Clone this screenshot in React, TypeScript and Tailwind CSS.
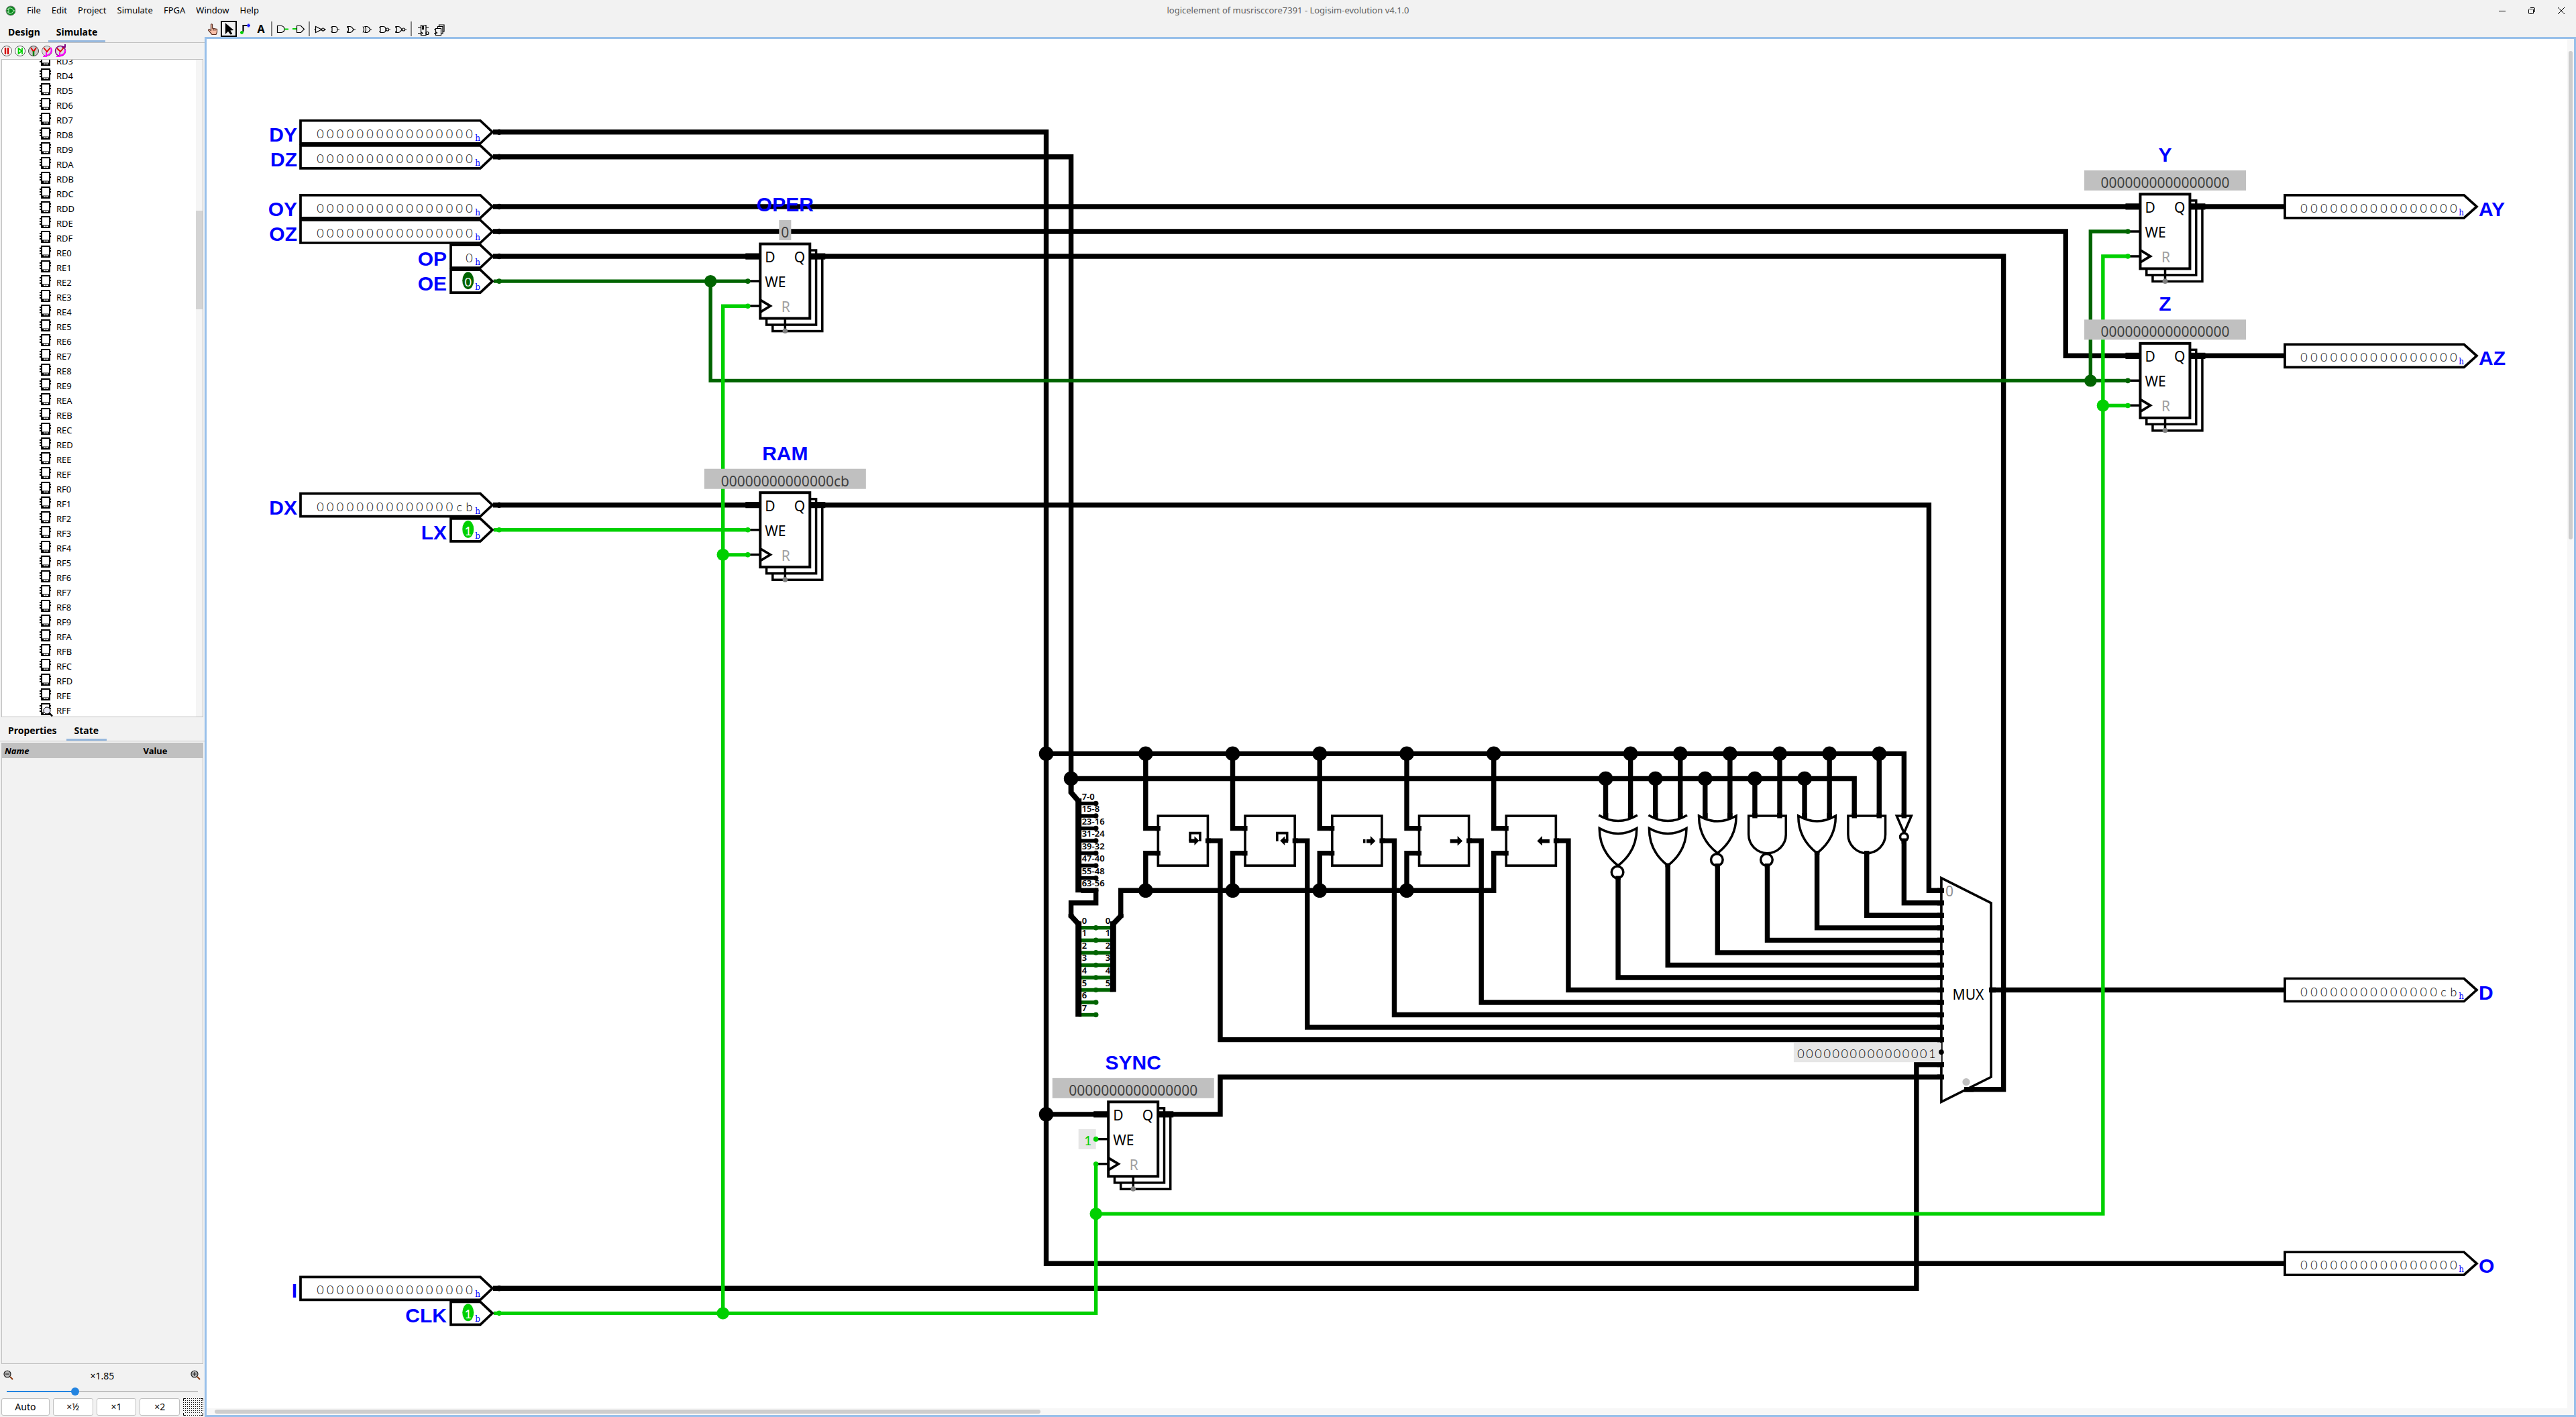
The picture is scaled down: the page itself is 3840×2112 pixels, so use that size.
import type { ReactNode } from "react";

const BLACK = "#000000";
const LOW = "#006400";
const HIGH = "#00d000";

const menus = ["File", "Edit", "Project", "Simulate", "FPGA", "Window", "Help"];
const HEX = "0123456789ABCDEF".split("");
const nodes = [
  ...HEX.slice(3).map((d) => "RD" + d),
  ...HEX.map((d) => "RE" + d),
  ...HEX.map((d) => "RF" + d),
];

// grid column / row to canvas pixels
const gx = (col: number) => col * 18.533 - 231.1;
const gy = (row: number) => row * 18.533 - 46.6;

type Point = [number, number];

function Wire({ pts, color = BLACK, bus = true }: { pts: Point[]; color?: string; bus?: boolean }) {
  return (
    <polyline
      points={pts.map(([c, r]) => `${gx(c)},${gy(r)}`).join(" ")}
      fill="none"
      stroke={color}
      strokeWidth={bus ? 7.4 : 5.4}
      strokeLinecap="square"
    />
  );
}

function Dot({ c, r, color = BLACK, size = 3.8 }: { c: number; r: number; color?: string; size?: number }) {
  return <circle cx={gx(c)} cy={gy(r)} r={size} fill={color} />;
}

function Label({ x, y, anchor = "middle", children }: { x: number; y: number; anchor?: "start" | "middle" | "end"; children: string }) {
  return (
    <text x={x} y={y} textAnchor={anchor} className="fill-[#0000ff] font-['Liberation_Sans',sans-serif] text-[30px] font-bold">
      {children}
    </text>
  );
}

// values are drawn one digit per cell
function Digits({ value, x, y, pitch }: { value: string; x: number; y: number; pitch: number }) {
  return (
    <g className="fill-black font-[Lato,sans-serif] text-[18px] font-light">
      {value.split("").map((d, i) => (
        <text key={i} x={x + i * pitch} y={y} textAnchor="middle">
          {d}
        </text>
      ))}
    </g>
  );
}

function Radix({ x, y, children }: { x: number; y: number; children: string }) {
  return (
    <text x={x} y={y} textAnchor="middle" className="fill-[#0000ff] font-['DejaVu_Serif',serif] text-[12px]">
      {children}
    </text>
  );
}

const ZERO = "0".repeat(16);

function InputPin({ row, name, value = ZERO, bit }: { row: number; name: string; value?: string; bit?: string }) {
  const y = gy(row);
  const small = value.length === 1;
  const left = small ? 364 : 140;
  return (
    <g>
      <path
        d={`M${left} ${y - 17}H408L426 ${y}L408 ${y + 17}H${left}Z`}
        fill="#fff"
        stroke="#000"
        strokeWidth="3.7"
      />
      {bit ? (
        <>
          <ellipse cx={gx(33.5)} cy={y - 1} rx="8.5" ry="13" fill={bit} />
          <text x={gx(33.5)} y={y + 8} textAnchor="middle" className="fill-white font-[Lato,sans-serif] text-[18px]">
            {value}
          </text>
        </>
      ) : (
        <Digits value={value} x={small ? 391.5 : 169.5} y={y + 9} pitch={14.8} />
      )}
      <Radix x={404} y={y + 13}>{bit ? "b" : "h"}</Radix>
      <Label x={small ? 358 : 135} y={y + 14} anchor="end">{name}</Label>
      <Dot c={36} r={row} color={bit ?? BLACK} size={bit ? 3.8 : 4.2} />
    </g>
  );
}

function OutputPin({ row, name, value = ZERO }: { row: number; name: string; value?: string }) {
  const y = gy(row);
  return (
    <g>
      <path d={`M3098 ${y - 17}H3365L3384 ${y}L3365 ${y + 17}H3098Z`} fill="#fff" stroke="#000" strokeWidth="3.7" />
      <Digits value={value} x={3126.5} y={y + 9} pitch={14.86} />
      <Radix x={3361} y={y + 13}>h</Radix>
      <Label x={3387} y={y + 14} anchor="start">{name}</Label>
    </g>
  );
}

// col is the left edge of the box, row the D input
function Register({ col, row, name, value = ZERO, we, clk = HIGH }: { col: number; row: number; name: string; value?: string; we: string; clk?: string }) {
  const x = gx(col);
  const y = gy(row);
  const mid = gx(col + 2);
  const short = value.length === 1;
  return (
    <g>
      <g fill="#fff" stroke="#000" strokeWidth="3.5">
        <rect x={x + 18.5} y={y + 0.5} width="74" height="111" />
        <rect x={x + 9.3} y={y - 9} width="74" height="111" />
        <rect x={x} y={y - 18.5} width="74" height="111" strokeWidth="4" />
      </g>
      <path d={`M${x - 22} ${y}H${x}M${x + 75} ${y}H${x + 97}`} stroke="#000" strokeWidth="9.3" />
      <path
        d={`M${x - 17} ${y + 37}H${x}M${x - 17} ${y + 74}H${x}M${mid} ${y + 93}V${y + 111}`}
        stroke="#000"
        strokeWidth="3.5"
      />
      <path d={`M${x + 1} ${y + 65.5}L${x + 15} ${y + 74}L${x + 1} ${y + 82.5}`} fill="none" stroke="#000" strokeWidth="3.7" />
      <Dot c={col - 1} r={row + 2} color={we} />
      <Dot c={col - 1} r={row + 4} color={clk} />
      <Dot c={col + 2} r={row + 6} color="#808080" />
      <g className="font-['Noto_Sans',sans-serif] text-[21px]">
        <text x={x + 7} y={y + 9}>D</text>
        <text x={x + 67} y={y + 9} textAnchor="end">Q</text>
        <text x={x + 7} y={y + 46}>WE</text>
        <text x={mid + 1} y={y + 83} textAnchor="middle" fill="#a0a0a0">R</text>
        <rect x={mid - (short ? 9 : 120.5)} y={y - 54} width={short ? 18 : 241} height="30" fill="#c0c0c0" />
        <text x={mid} y={y - 28} textAnchor="middle" fill="#404040">{value}</text>
      </g>
      <Label x={mid} y={y - 67}>{name}</Label>
    </g>
  );
}

function Shifter({ col, children }: { col: number; children: ReactNode }) {
  return (
    <g>
      <rect x={gx(col)} y={gy(65)} width="74.1" height="74.1" fill="#fff" stroke="#000" strokeWidth="3.6" />
      <path
        d={`M${gx(col) - 4} ${gy(66)}h7.5M${gx(col) - 4} ${gy(68)}h7.5M${gx(col + 4) - 3.5} ${gy(67)}h8`}
        stroke="#000"
        strokeWidth="7.4"
      />
      <g transform={`translate(${gx(col + 4)} ${gy(67)})`}>{children}</g>
    </g>
  );
}

const OR_BODY = "M-27.8 0Q0 16 27.8 0Q28 34 0 55.6Q-28 34 -27.8 0Z";
const AND_BODY = "M-27.8 0H27.8V27.8A27.8 27.8 0 0 1 -27.8 27.8Z";

function Gate({ col, kind, negate }: { col: number; kind: "and" | "or" | "xor"; negate?: boolean }) {
  const drop = kind === "xor" ? 18.5 : 0;
  return (
    <g transform={`translate(${gx(col)} ${gy(65)})`} fill="#fff" stroke="#000" strokeWidth="3.5">
      {kind === "xor" && <path d="M-28.8 -1Q0 16 28.8 -1" fill="none" />}
      <path d={kind === "and" ? AND_BODY : OR_BODY} transform={`translate(0 ${drop})`} />
      {negate && <circle cx="-1" cy={65.5 + drop} r="8.8" />}
      <path d="M-18.5 -4V3.5M18.5 -4V3.5" strokeWidth="7.4" />
      <path d={`M0 ${drop + (negate ? 71 : 52)}v6`} strokeWidth="7.4" />
    </g>
  );
}

function Splitters() {
  const ranges = ["7-0", "15-8", "23-16", "31-24", "39-32", "47-40", "55-48", "63-56"];
  const left = 1299.7;
  const right = 1351.3;
  return (
    <g>
      <g stroke="#000" strokeWidth="8" fill="none">
        <path d={`M${gx(82)} ${gy(62)}V${gy(63) + 2}L${left} ${gy(63) + 15}`} />
        <path d={`M${gx(82)} ${gy(73) - 2}V${gy(73) + 1}L${left} ${gy(73) + 13}`} />
        <path d={`M${gx(86)} ${gy(73) - 2}V${gy(73) + 1}L${right} ${gy(73) + 13}`} />
      </g>
      {ranges.map((_, i) => (
        <g key={i}>
          <path d={`M${left} ${gy(64 + i)}H${gx(84)}`} stroke="#000" strokeWidth="5.5" />
          <Dot c={84} r={64 + i} />
          <path d={`M${left} ${gy(74 + i)}H${i < 6 ? right : gx(84)}`} stroke={LOW} strokeWidth="5.5" />
          <Dot c={84} r={74 + i} color={LOW} />
        </g>
      ))}
      <g className="font-['Noto_Sans',sans-serif] text-[13px] font-semibold">
        {ranges.map((t, i) => (
          <text key={t} x={left + 5} y={gy(64 + i) - 6}>{t}</text>
        ))}
        {ranges.map((t, i) => (
          <text key={t} x={left + 5} y={gy(74 + i) - 6}>{i}</text>
        ))}
        {ranges.slice(0, 6).map((t, i) => (
          <text key={t} x={right - 4} y={gy(74 + i) - 6} textAnchor="end">{i}</text>
        ))}
      </g>
      <g stroke="#000" strokeWidth="9">
        <path d={`M${left} ${gy(63) + 11}V${gy(71) + 3}`} />
        <path d={`M${left} ${gy(73) + 9}V${gy(81) + 3}`} />
        <path d={`M${right} ${gy(73) + 9}V${gy(79) + 3}`} />
      </g>
    </g>
  );
}

function Mux() {
  return (
    <g>
      <path
        d={`M${gx(152)} ${gy(70)}L${gx(156)} ${gy(72)}V${gy(86)}L${gx(152)} ${gy(88)}Z`}
        fill="#fff"
        stroke="#000"
        strokeWidth="3.6"
      />
      {Array.from({ length: 16 }, (_, i) => i + 71).filter((r) => r !== 84).map((r) => (
        <path key={r} d={`M${gx(152) - 6} ${gy(r)}h10`} stroke="#000" strokeWidth="7.4" />
      ))}
      <rect x={gx(152) - 220} y={gy(84) - 14} width="220" height="29" fill="#e6e6e6" />
      <Digits value="0000000000000001" x={2376.5} y={gy(84) + 9} pitch={13.05} />
      <Dot c={152} r={84} />
      <path d={`M${gx(156) - 3} ${gy(79)}h10M${gx(154) - 3} ${gy(87)}h14`} stroke="#000" strokeWidth="7.4" />
      <circle cx={gx(154)} cy={gy(86.4)} r="5.6" fill="#c0c0c0" />
      <g className="font-['Noto_Sans',sans-serif] text-[21px]">
        <text x={gx(154) + 3} y={gy(79) + 14} textAnchor="middle" className="fill-black">MUX</text>
        <text x={gx(152) + 6} y={gy(71) + 9} fill="#909090">0</text>
      </g>
    </g>
  );
}

const wires: Point[][] = [
  [[35.7, 10], [80, 10], [80, 101], [179.5, 101]],
  [[35.7, 12], [82, 12], [82, 62]],
  [[35.7, 16], [167, 16]],
  [[35.7, 18], [162, 18], [162, 28], [167, 28]],
  [[35.7, 20], [56, 20]],
  [[62, 20], [157, 20], [157, 87], [154, 87]],
  [[35.7, 40], [56, 40]],
  [[62, 40], [151, 40], [151, 71], [152, 71]],
  [[173, 16], [179.5, 16]],
  [[173, 28], [179.5, 28]],
  [[156, 79], [179.5, 79]],
  [[35.7, 103], [150, 103], [150, 85], [152, 85]],
  [[80, 60], [149, 60], [149, 65]],
  [[82, 62], [145, 62], [145, 65]],
  [[80, 89], [84, 89]],
  [[90, 89], [94, 89], [94, 86], [152, 86]],
  [[83, 71], [84, 71], [84, 72], [82, 72], [82, 73]],
  [[86, 73], [86, 71], [116, 71], [116, 68], [117, 68]],
  [[149, 67], [149, 72], [152, 72]],
];

const shifterCols = [89, 96, 103, 110, 117];
const gateOuts: Point[] = [[146, 68], [142, 68], [138, 69], [134, 69], [130, 69], [126, 70]];

function Circuit() {
  return (
    <svg className="block h-full w-full" role="img" aria-label="logicelement">
      {wires.map((pts, i) => <Wire key={i} pts={pts} />)}
      {shifterCols.map((c, i) => (
        <g key={c}>
          <Wire pts={[[c - 1, 60], [c - 1, 66], [c, 66]]} />
          {i < 4 && <Wire pts={[[c - 1, 71], [c - 1, 68], [c, 68]]} />}
          <Wire pts={[[c + 4, 67], [c + 5, 67], [c + 5, 83 - i], [152, 83 - i]]} />
          <Dot c={c - 1} r={60} size={10.8} />
          {i < 4 && <Dot c={c - 1} r={71} size={10.8} />}
        </g>
      ))}
      {gateOuts.map(([c, r], i) => (
        <g key={c}>
          <Wire pts={[[c, r], [c, 73 + i], [152, 73 + i]]} />
          <Wire pts={[[c + 1, 60], [c + 1, 65]]} />
          <Dot c={c + 1} r={60} size={10.8} />
          {i > 0 && <Wire pts={[[c - 1, 62], [c - 1, 65]]} />}
          {i > 0 && <Dot c={c - 1} r={62} size={10.8} />}
        </g>
      ))}
      <Dot c={80} r={60} size={10.8} />
      <Dot c={82} r={62} size={10.8} />
      <Dot c={80} r={89} size={10.8} />

      <Wire bus={false} color={LOW} pts={[[35.7, 22], [56, 22]]} />
      <Wire bus={false} color={LOW} pts={[[53, 22], [53, 30], [167, 30]]} />
      <Wire bus={false} color={LOW} pts={[[164, 30], [164, 18], [167, 18]]} />
      <Wire bus={false} color={HIGH} pts={[[35.7, 42], [56, 42]]} />
      <Wire bus={false} color={HIGH} pts={[[35.7, 105], [84, 105], [84, 93]]} />
      <Wire bus={false} color={HIGH} pts={[[54, 105], [54, 24], [56, 24]]} />
      <Wire bus={false} color={HIGH} pts={[[54, 44], [56, 44]]} />
      <Wire bus={false} color={HIGH} pts={[[84, 97], [165, 97], [165, 20], [167, 20]]} />
      <Wire bus={false} color={HIGH} pts={[[165, 32], [167, 32]]} />
      <Dot c={53} r={22} color={LOW} size={9.2} />
      <Dot c={164} r={30} color={LOW} size={9.2} />
      <Dot c={54} r={44} color={HIGH} size={9.2} />
      <Dot c={54} r={105} color={HIGH} size={9.2} />
      <Dot c={84} r={97} color={HIGH} size={9.2} />
      <Dot c={165} r={32} color={HIGH} size={9.2} />

      <InputPin row={10} name="DY" />
      <InputPin row={12} name="DZ" />
      <InputPin row={16} name="OY" />
      <InputPin row={18} name="OZ" />
      <InputPin row={20} name="OP" value="0" />
      <InputPin row={22} name="OE" value="0" bit={LOW} />
      <InputPin row={40} name="DX" value="00000000000000cb" />
      <InputPin row={42} name="LX" value="1" bit={HIGH} />
      <InputPin row={103} name="I" />
      <InputPin row={105} name="CLK" value="1" bit={HIGH} />

      <OutputPin row={16} name="AY" />
      <OutputPin row={28} name="AZ" />
      <OutputPin row={79} name="D" value="00000000000000cb" />
      <OutputPin row={101} name="O" />

      <Register col={57} row={20} name="OPER" value="0" we={LOW} />
      <Register col={57} row={40} name="RAM" value="00000000000000cb" we={HIGH} />
      <Register col={168} row={16} name="Y" we={LOW} />
      <Register col={168} row={28} name="Z" we={LOW} />
      <rect x={gx(84) - 26} y={gy(91) - 15} width="26" height="30" fill="#e6e6e6" />
      <text x={gx(84) - 12} y={gy(91) + 9} textAnchor="middle" className="fill-[#00d000] font-[Lato,sans-serif] text-[19px]">
        1
      </text>
      <Register col={85} row={89} name="SYNC" we={HIGH} />

      <Shifter col={89}>
        <path d="M-26.4 1V-11.5H-11.5V1" fill="none" stroke="#000" strokeWidth="3.6" />
        <path d="M-28 -2.5h8v-4l7 6.5-7 7v-4h-8z" />
      </Shifter>
      <Shifter col={96}>
        <path d="M-26.4 1V-11.5H-11.5V1" fill="none" stroke="#000" strokeWidth="3.6" />
        <path d="M-10 -2.5h-5v-4l-7 6.5 7 7v-4h5z" />
      </Shifter>
      <Shifter col={103}>
        <path d="M-28 -2h3.5v5.5h-3.5zM-23.5 -2h1v5.5h-1zM-22 -2h5v-5l7.5 7.5-7.5 7v-4h-5z" />
      </Shifter>
      <Shifter col={110}>
        <path d="M-28 -2h11v-5l7.5 7.5-7.5 7v-4h-11z" />
      </Shifter>
      <Shifter col={117}>
        <path d="M-9.5 -2h-11v-5l-7.5 7.5 7.5 7v-4h11z" />
      </Shifter>

      <Gate col={126} kind="xor" negate />
      <Gate col={130} kind="xor" />
      <Gate col={134} kind="or" negate />
      <Gate col={138} kind="and" negate />
      <Gate col={142} kind="or" />
      <Gate col={146} kind="and" />
      <g transform={`translate(${gx(149)} ${gy(65)})`} fill="#fff" stroke="#000" strokeWidth="3.5">
        <path d="M-11 0H11L0 25.5Z" />
        <circle cy="31.5" r="5.8" />
        <path d="M0 -4V3.5M0 33.5v8" strokeWidth="7.4" />
      </g>
      <Splitters />
      <Mux />
    </svg>
  );
}

function Tool({ label, active, children }: { label: string; active?: boolean; children: ReactNode }) {
  return (
    <button aria-label={label} className={active ? "h-6 w-6 border-2 border-black" : "h-6 w-6"}>
      <svg viewBox={active ? "2 2 20 20" : "0 0 24 24"} className="h-full w-full" fill="none" stroke="#000" strokeWidth="1.2">
        {children}
      </svg>
    </button>
  );
}

function Divider() {
  return <span className="mx-[3px] h-[22px] w-[2px] bg-[#808080]" />;
}

function Toolbar() {
  return (
    <div className="flex h-6 items-center">
      <Tool label="Poke">
        <path d="M9.5 5.5q1-1.5 2 0V11l7 1.5V17l-1.5 3.5h-6L5.5 14l1-1.5 3 2z" fill="#f8bfa8" stroke="#5a2d20" />
        <path d="M13 11.5v3M15.5 12v3" stroke="#5a2d20" />
      </Tool>
      <Tool label="Select" active>
        <path d="M7.5 4.5v14l3.5-3.5 4 5 1.5-1-3-5 4.5-.5z" fill="#000" />
      </Tool>
      <Tool label="Wire">
        <path d="M9.5 16V7H16" strokeWidth="2.2" />
        <path d="M17.5 4.5v5M15 7h5" stroke="#2020ff" strokeWidth="2.4" />
        <path d="M7.5 15v5M5 17.5h5" stroke="#00d000" strokeWidth="2.4" />
      </Tool>
      <button aria-label="Text" className="h-6 w-6 text-[16px] leading-6 font-bold">A</button>
      <Divider />
      <Tool label="Input">
        <path d="M4.5 7.5h6q4.5 1 4.5 5t-4.5 5h-6z" />
        <path d="M15 12.5h6" stroke="#00d000" strokeWidth="2" />
      </Tool>
      <Tool label="Output">
        <path d="M9.5 7.5h6l5 5-5 5h-6z" />
        <path d="M3 12h6" stroke="#00d000" strokeWidth="2" />
      </Tool>
      <Divider />
      <Tool label="NOT gate">
        <path d="M3.5 13h2M5.5 8.5v9l9-4.5zM18.5 13h2.5" />
        <circle cx="16.5" cy="13" r="2" />
      </Tool>
      <Tool label="AND gate">
        <path d="M4 10h2M4 16h2M6 8.5h4q4 0 4 4.5t-4 4.5H6zM14 13h3" />
      </Tool>
      <Tool label="OR gate">
        <path d="M4 10h3M4 16h3M5 8.5h4q3 .5 5 4.5-2 4-5 4.5H5q3-4.5 0-9zM14 13h3" />
      </Tool>
      <Tool label="XOR gate">
        <path d="M4 8.5q3 4.5 0 9M7 8.5h3q3 .5 5 4.5-2 4-5 4.5H7q3-4.5 0-9zM15 13h2" />
      </Tool>
      <Tool label="NAND gate">
        <path d="M4 10h2M4 16h2M6 8.5h4q4 0 4 4.5t-4 4.5H6zM18.5 13h2.5" />
        <circle cx="16.5" cy="13" r="2" />
      </Tool>
      <Tool label="NOR gate">
        <path d="M4 10h3M4 16h3M5 8.5h4q3 .5 5 4.5-2 4-5 4.5H5q3-4.5 0-9zM18.5 13h2.5" />
        <circle cx="16.5" cy="13" r="2" />
      </Tool>
      <Divider />
      <Tool label="Flip-flop">
        <path d="M10.5 6.5h7.5v15h-7.5zM6 9.5h4.5M6 18.5h4.5M18 9.5h4M10.5 16.5l2.5 2-2.5 2" />
        <rect x="12.5" y="8.5" width="2" height="4" />
        <circle cx="20" cy="18.5" r="2" />
      </Tool>
      <Tool label="Register">
        <path d="M8.5 11.5h8v10h-8zM11.5 11.5v-3h7.5v10.5h-2.5M13.5 8.500v-2.500h7.5v10h-2M6 13.5h2.5M6 18.5h2.5M8.5 16.500l2 1.500-2 1.500" />
      </Tool>
    </div>
  );
}

function SimButton({ label, children }: { label: string; children: ReactNode }) {
  return (
    <button aria-label={label} className="h-5 w-5">
      <svg viewBox="0 0 20 20" className="h-5 w-5" fill="none">
        {children}
      </svg>
    </button>
  );
}

function SimBar() {
  return (
    <div className="flex h-6 items-center">
      <SimButton label="Pause">
        <circle cx="10" cy="10" r="7.5" fill="#fff" stroke="#555" />
        <path d="M8 5v10M12 5v10" stroke="#d00000" strokeWidth="2.5" />
      </SimButton>
      <SimButton label="Step">
        <circle cx="10" cy="10" r="7.5" fill="#fff" stroke="#555" />
        <path d="M7.5 5v10M13 5v10M7.5 6l5 4-5 4" stroke="#00d000" strokeWidth="1.8" />
      </SimButton>
      <SimButton label="Ticks">
        <circle cx="10" cy="10" r="7.5" fill="#c8c8c8" stroke="#444" />
        <path d="M6 5l4 6 4-6" stroke="#e00000" strokeWidth="2" />
        <path d="M10 10v7" stroke="#008000" strokeWidth="2.5" />
      </SimButton>
      <SimButton label="Half tick">
        <circle cx="10" cy="10" r="7.5" fill="#ddd" stroke="#777" />
        <path d="M5 5l5 6 5-6" stroke="#e00000" strokeWidth="1.8" />
        <path d="M16 5q3 10-8 12M4 18h5v-6" stroke="#ff00ff" strokeWidth="2" />
      </SimButton>
      <SimButton label="Full tick">
        <circle cx="10" cy="10" r="7.5" fill="#ddd" stroke="#800080" strokeWidth="1.5" />
        <path d="M5 6l5 5 5-6" stroke="#e00000" strokeWidth="1.8" />
        <path d="M17 8q1 8-9 9M4 18h5v-6" stroke="#ff00ff" strokeWidth="2" />
        <path d="M12 4h5V0" stroke="#800080" strokeWidth="2" />
      </SimButton>
    </div>
  );
}

function ChipIcon({ viewed }: { viewed: boolean }) {
  return (
    <svg viewBox="0 0 20 20" className="h-5 w-5">
      <path d="M2 0H16V18H2zM0 3h2v2H0zM0 7h2v2H0zM0 11h2v2H0zM16 3h1v2h-1zM16 7h1v2h-1z" />
      <path d="M4 2h10v11.5H4zM6 14.5h3v1.5H6zM10 14.5h3v1.5h-3z" fill="#fff" />
      {viewed && <circle cx="11" cy="11" r="5" fill="#e8e8f4" stroke="#000" />}
      {viewed && <path d="M14.5 14.5L19 19.5" stroke="#000" strokeWidth="2.5" />}
    </svg>
  );
}

function Tab({ active, children }: { active?: boolean; children: string }) {
  return (
    <button
      className={
        active
          ? "h-8 border-b-[3px] border-[#98b9de] px-3 pt-1 text-[14px] font-bold"
          : "h-8 px-3 pt-[1px] text-[14px] font-bold"
      }
    >
      {children}
    </button>
  );
}

function ZoomIcon({ plus }: { plus?: boolean }) {
  return (
    <svg viewBox="0 0 16 16" className="h-4 w-4" fill="none" stroke="#222" strokeWidth="1.2">
      <circle cx="6" cy="6" r="5" fill="#b8b8b8" />
      <path d={plus ? "M3 6h6M6 3v6" : "M3 6h6"} />
      <path d="M10 10l4 4" stroke="#8b3a10" strokeWidth="2" />
    </svg>
  );
}

function ZoomPanel() {
  const button = "h-[26px] rounded-[3px] border border-[#c0c0c0] bg-white text-[14px] leading-none";
  return (
    <div className="px-[2px] pb-[2px]">
      <div className="flex h-8 items-center justify-between px-[3px] pt-[2px]">
        <button aria-label="Zoom out"><ZoomIcon /></button>
        <span className="text-[14px]">×1.85</span>
        <button aria-label="Zoom in"><ZoomIcon plus /></button>
      </div>
      <div className="flex h-[18px] items-center px-2">
        <input
          type="range"
          aria-label="Zoom"
          min={0}
          max={100}
          defaultValue={35}
          className="h-[2px] w-full appearance-none bg-[linear-gradient(to_right,#2384e0_36%,#c0c0c0_36%)] [&::-webkit-slider-thumb]:h-3 [&::-webkit-slider-thumb]:w-3 [&::-webkit-slider-thumb]:appearance-none [&::-webkit-slider-thumb]:rounded-full [&::-webkit-slider-thumb]:bg-[#2384e0]"
        />
      </div>
      <div className="flex gap-[5px] pt-[1px]">
        <button className={button + " w-[72px]"}>Auto</button>
        <button className={button + " w-[60px]"}>×½</button>
        <button className={button + " w-[60px]"}>×1</button>
        <button className={button + " w-[60px]"}>×2</button>
        <button aria-label="Show grid" className="h-[26px] w-[30px]">
          <svg viewBox="0 0 30 26" className="h-full w-full" fill="none" stroke="#000">
            {[3.5, 6.5, 9.5, 12.5, 15.5, 18.5, 21.5].map((y) => (
              <path key={y} d={`M3 ${y}H28`} strokeDasharray="1 2" />
            ))}
            <path d="M.5 4V.5H4M26 .5h3.5V4M.5 22v3.5H4M26 25.5h3.5V22" />
            <path d="M6 .5h19M6 25.5h19M.5 6v15M29.5 6v15" strokeDasharray="1 2" />
          </svg>
        </button>
      </div>
    </div>
  );
}

function Explorer() {
  return (
    <aside className="flex w-[305px] shrink-0 flex-col">
      <div className="flex border-b border-[#c0c0c0]">
        <Tab>Design</Tab>
        <Tab active>Simulate</Tab>
      </div>
      <SimBar />
      <div className="mx-[2px] flex min-h-0 flex-[981] overflow-hidden border border-[#c0c0c0] bg-white">
        <ul className="-mt-[9px] flex-1 pl-14">
          {nodes.map((n) => (
            <li key={n} className="flex h-[22px] items-start gap-[5px] text-[13px] leading-[22px]">
              <ChipIcon viewed={n === "RFF"} />
              {n}
            </li>
          ))}
        </ul>
        <div className="w-[10px] bg-[#f5f5f5]">
          <div className="h-[23%]" />
          <div className="h-[15%] bg-[#d4d4d4]" />
        </div>
      </div>
      <div className="mt-[3px] mb-[2px] flex gap-[2px] border-b border-[#c0c0c0]">
        <Tab>Properties</Tab>
        <Tab active>State</Tab>
      </div>
      <div className="mx-[2px] min-h-0 flex-[925] border border-[#c0c0c0]">
        <table className="w-full table-fixed text-[13px] font-bold">
          <thead>
            <tr className="h-[22px] bg-[#c0c0c0]">
              <th className="w-[158px] pl-1 text-left italic">Name</th>
              <th>Value</th>
            </tr>
          </thead>
        </table>
      </div>
      <ZoomPanel />
    </aside>
  );
}

export default function App() {
  return (
    <div className="flex h-screen flex-col overflow-hidden bg-[#f2f2f2] font-['Noto_Sans',sans-serif] text-black">
      <header className="relative flex h-[31px] shrink-0 items-center pl-2">
        <svg viewBox="0 0 16 16" className="h-4 w-4" fill="none">
          <circle cx="8" cy="8" r="7" fill="#078a1c" stroke="#777" />
          <path d="M5 4h3q4 1 4 4t-4 4H5zM2 6h3M2 10h3M12 8h3" stroke="#c8f0c8" />
        </svg>
        <nav className="ml-2 flex text-[13px]">
          {menus.map((m) => (
            <button key={m} className="px-2">{m}</button>
          ))}
        </nav>
        <h1 className="pointer-events-none absolute inset-x-0 text-center text-[13px] text-[#606060]">
          logicelement of musrisccore7391 - Logisim-evolution v4.1.0
        </h1>
        <div className="ml-auto flex gap-7 pr-[14px]">
          <button aria-label="Minimize">
            <svg viewBox="0 0 16 16" className="h-4 w-4" stroke="#000"><path d="M3 8.5h10" /></svg>
          </button>
          <button aria-label="Restore">
            <svg viewBox="0 0 16 16" className="h-4 w-4" fill="none" stroke="#000">
              <rect x="3.5" y="5.5" width="7" height="7" rx="1" />
              <path d="M6 3.5h5q1.5 0 1.5 1.5v5" />
            </svg>
          </button>
          <button aria-label="Close">
            <svg viewBox="0 0 16 16" className="h-4 w-4" stroke="#000"><path d="M3 3l10 10M13 3L3 13" /></svg>
          </button>
        </div>
      </header>
      <div className="flex min-h-0 flex-1">
        <Explorer />
        <main className="flex min-w-0 flex-1 flex-col">
          <Toolbar />
          <div className="flex min-h-0 flex-1 flex-col border-[3px] border-[#98c0ea] bg-white">
            <div className="flex min-h-0 flex-1">
              <div className="min-w-0 flex-1 overflow-hidden">
                <Circuit />
              </div>
              <div className="w-[10px] bg-[#f7f7f7] px-[2px] pt-[18px]">
                <div className="h-[36%] rounded-full bg-[#cdcdcd]" />
              </div>
            </div>
            <div className="h-[10px] bg-[#f7f7f7] py-[2px] pl-3">
              <div className="h-[6px] w-[35%] rounded-full bg-[#cdcdcd]" />
            </div>
          </div>
        </main>
      </div>
    </div>
  );
}
